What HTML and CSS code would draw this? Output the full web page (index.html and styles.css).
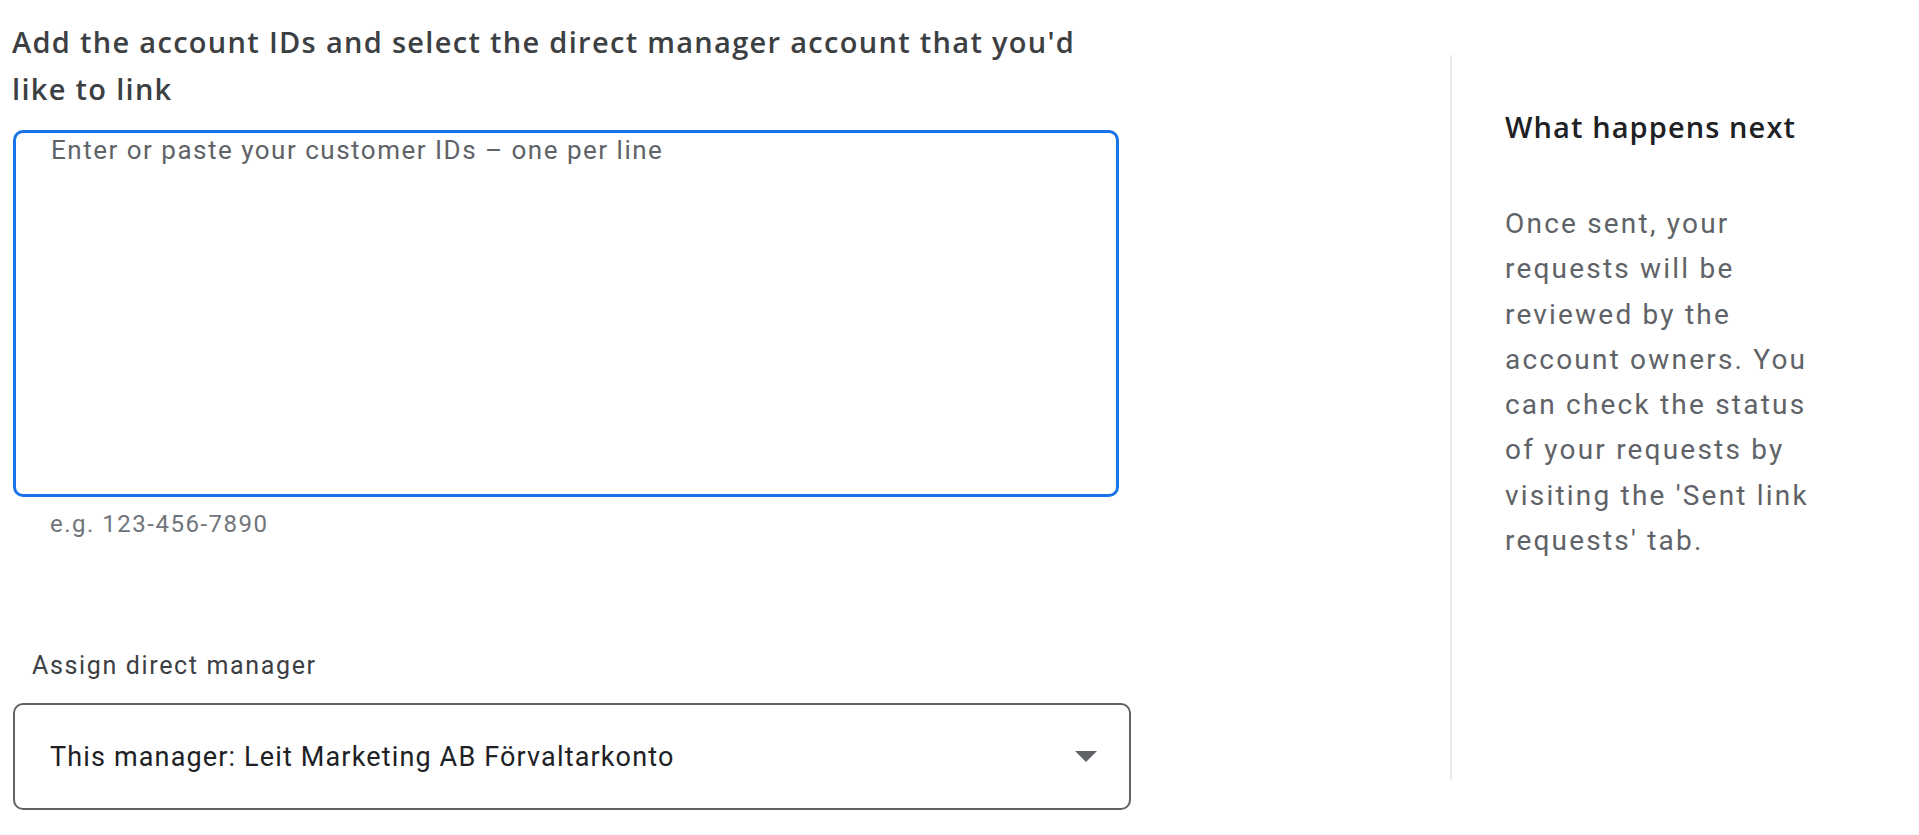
FILE: index.html
```html
<!DOCTYPE html>
<html lang="en">
<head>
<meta charset="utf-8">
<title>Link accounts</title>
<link rel="stylesheet" href="styles.css">
</head>
<body>
<div class="page">
  <main class="form-col">
    <h2 class="form-title">Add the account IDs and select the direct manager account that you'd<br>like to link</h2>
    <div class="ids-field">
      <textarea class="ids-input" placeholder="Enter or paste your customer IDs – one per line"></textarea>
    </div>
    <div class="hint">e.g. 123-456-7890</div>
    <div class="select-label">Assign direct manager</div>
    <div class="select-box">
      <span class="select-value">This manager: Leit Marketing AB Förvaltarkonto</span>
      <svg class="select-arrow" width="22" height="11" viewBox="0 0 22 11"><path d="M0 0 L22 0 L11 11 Z" fill="#5f6368"/></svg>
    </div>
  </main>
  <aside class="side">
    <h3 class="side-title">What happens next</h3>
    <p class="side-text">Once sent, your<br>requests will be<br>reviewed by the<br>account owners. You<br>can check the status<br>of your requests by<br>visiting the 'Sent link<br>requests' tab.</p>
  </aside>
</div>
</body>
</html>
```

FILE: styles.css
```css
html, body {
  margin: 0;
  padding: 0;
  background: #ffffff;
}

body {
  font-family: Roboto, "Liberation Sans", sans-serif;
  width: 1919px;
  height: 835px;
  overflow: hidden;
}

.page {
  display: flex;
  align-items: flex-start;
}

.form-col {
  width: 1119px;
  padding-left: 13px;
  padding-top: 18px;
  flex: none;
}

.form-title {
  margin: 0 0 18px -1px;
  font-family: "Open Sans", Roboto, sans-serif;
  font-weight: 600;
  font-size: 29px;
  line-height: 47px;
  letter-spacing: 1.3px;
  color: #3c4043;
}

.ids-field {
  width: 1106px;
  height: 367px;
  box-sizing: border-box;
  border: 3px solid #1a73e8;
  border-radius: 10px;
}

.ids-input {
  display: block;
  width: 100%;
  height: 100%;
  box-sizing: border-box;
  border: none;
  outline: none;
  resize: none;
  padding: 0 20px 0 35px;
  background: transparent;
  font-family: Roboto, sans-serif;
  font-size: 26px;
  line-height: 34px;
  letter-spacing: 1.5px;
  color: #202124;
}

.ids-input::placeholder {
  color: #5f6368;
  opacity: 1;
}

.hint {
  margin-top: 11px;
  padding-left: 37px;
  font-size: 24px;
  line-height: 32px;
  letter-spacing: 1.5px;
  color: #70757a;
}

.select-label {
  margin-top: 110px;
  padding-left: 19px;
  font-size: 25px;
  line-height: 32px;
  letter-spacing: 1.65px;
  color: #3c4043;
}

.select-box {
  margin-top: 21px;
  height: 107px;
  box-sizing: border-box;
  border: 2px solid #5f6368;
  border-radius: 10px;
  display: flex;
  align-items: center;
  padding: 0 32px 0 35px;
  width: 1118px;
}

.select-value {
  flex: 1;
  font-size: 27px;
  letter-spacing: 1.15px;
  color: #202124;
}

.select-arrow {
  flex: none;
  display: block;
}

.side {
  margin-left: 318px;
  margin-top: 55px;
  height: 725px;
  border-left: 2px solid #e8eaed;
  padding-left: 53px;
  box-sizing: border-box;
}

.side-title {
  margin: 52px 0 0 0;
  font-family: "Open Sans", Roboto, sans-serif;
  font-weight: 600;
  font-size: 29px;
  line-height: 40px;
  letter-spacing: 1.1px;
  color: #202124;
}

.side-text {
  margin: 54px 0 0 0;
  font-size: 28px;
  line-height: 45.3px;
  letter-spacing: 2.2px;
  color: #5f6368;
}
```
